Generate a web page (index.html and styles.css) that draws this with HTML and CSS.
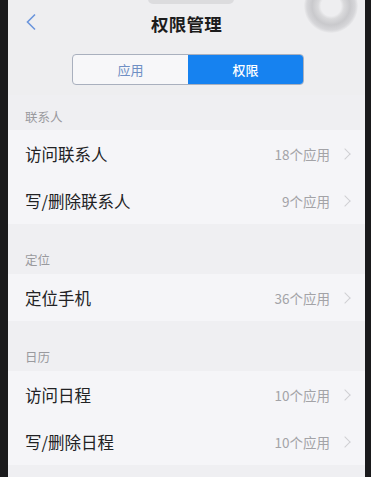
FILE: index.html
```html
<!DOCTYPE html>
<html lang="zh">
<head>
<meta charset="utf-8">
<link rel="stylesheet" href="styles.css">
</head>
<body>
<div class="screen">
  <div class="notch"></div>
  <div class="float-ring"></div>
  <div class="top">
    <div class="header">
      <svg class="back" width="12" height="18" viewBox="0 0 12 18"><path d="M10 1.5 L2.5 9 L10 16.5" fill="none" stroke="#6b95dc" stroke-width="1.6"/></svg>
      <div class="title">权限管理</div>
    </div>
    <div class="seg">
      <div class="seg-item">应用</div>
      <div class="seg-item active">权限</div>
    </div>
  </div>
  <div class="sec-head first">联系人</div>
  <div class="row"><span class="label">访问联系人</span><span class="count">18个应用</span><span class="chev"></span></div>
  <div class="row"><span class="label">写/删除联系人</span><span class="count">9个应用</span><span class="chev"></span></div>
  <div class="sec-head">定位</div>
  <div class="row"><span class="label">定位手机</span><span class="count">36个应用</span><span class="chev"></span></div>
  <div class="sec-head">日历</div>
  <div class="row"><span class="label">访问日程</span><span class="count">10个应用</span><span class="chev"></span></div>
  <div class="row"><span class="label">写/删除日程</span><span class="count">10个应用</span><span class="chev"></span></div>
  <div class="bottom"></div>
</div>
</body>
</html>
```
FILE: styles.css
```css
html, body {
  margin: 0;
  padding: 0;
  background: #1a1a1c;
  height: 477px;
  overflow: hidden;
}
body {
  font-family: "Noto Sans CJK SC", "Noto Sans", sans-serif;
}
.screen {
  position: relative;
  margin-left: 8px;
  width: 357px;
  height: 477px;
  background: #f4f4f7;
  overflow: hidden;
  box-shadow: inset 2px 0 2px rgba(0,0,0,0.12);
}
.notch {
  position: absolute;
  left: 140px;
  top: -6px;
  width: 86px;
  height: 10px;
  border-radius: 6px;
  background: #dcdcde;
}
.float-ring {
  position: absolute;
  left: 296px;
  top: -21px;
  width: 54px;
  height: 54px;
  border-radius: 50%;
  background: radial-gradient(circle at 50% 50%, #eeeef0 0, #eeeef0 10px, #dadadc 13px, #c9c9cc 19px, #d6d6d9 24px, #ebebed 27px);
}
.top {
  background: #eeeef0;
  height: 95px;
}
.header {
  height: 46px;
  display: flex;
  align-items: center;
  justify-content: center;
  position: relative;
}
.back {
  position: absolute;
  left: 17px;
  top: 13px;
}
.title {
  font-size: 17.5px;
  font-weight: 700;
  color: #1c1c1c;
  letter-spacing: 0.3px;
}
.seg {
  margin: 8px 0 0 64px;
  width: 230px;
  height: 29px;
  display: flex;
  border: 1px solid #a9b0be;
  border-radius: 4px;
  overflow: hidden;
  background: #f7f7f9;
}
.seg-item {
  flex: 1;
  display: flex;
  align-items: center;
  justify-content: center;
  font-size: 13px;
  color: #6f8fc4;
}
.seg-item.active {
  background: #1682f0;
  color: #ffffff;
  font-weight: 500;
}
.sec-head {
  height: 50px;
  box-sizing: border-box;
  padding: 0 0 6px 17px;
  display: flex;
  align-items: flex-end;
  font-size: 12.5px;
  line-height: 16px;
  color: #9a9a9e;
  background: #efeff2;
}
.sec-head.first {
  height: 35px;
  padding-bottom: 5px;
}
.row {
  height: 47px;
  display: flex;
  align-items: center;
  padding: 0 0 0 17px;
  background: #f5f5f8;
}
.label {
  flex: 1;
  font-size: 16.5px;
  color: #222224;
}
.count {
  font-size: 13.5px;
  color: #a3a3a7;
  margin-right: 11px;
}
.chev {
  width: 7px;
  height: 7px;
  border-top: 1.3px solid #cfcfd3;
  border-right: 1.3px solid #cfcfd3;
  transform: rotate(45deg);
  margin-right: 16px;
}
.bottom {
  height: 20px;
  background: #efeff2;
}
```
